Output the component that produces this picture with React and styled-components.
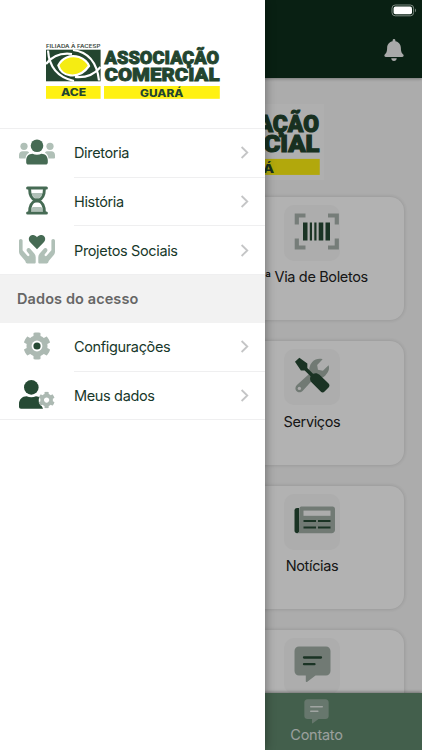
import styled, { createGlobalStyle } from 'styled-components';
import { FaBell, FaCog } from 'react-icons/fa';

const Logo = ({ wide }) => (
  <LogoSvg viewBox="0 0 174 58" $wide={wide}>
    <text x="0" y="4.8" fontSize="4.9" fontWeight="600" fill="#3c4a42" textLength="54.5" lengthAdjust="spacingAndGlyphs">
      FILIADA À FACESP
    </text>
    <rect x="0" y="6.7" width="54.6" height="31.6" fill="#23452f" />
    <g fill="none" stroke="#fff" strokeWidth="2.2">
      <path d="M2 7.5C3 22 10 34 28 38" />
      <path d="M27 7C43 9 51 20 53 37.5" />
      <path d="M0 21C7 12 15 9.5 26 11" />
      <path d="M54.6 24C48 32 40 35 29 34" />
    </g>
    <path
      d="M12.3 22.5C16 15 24 11.5 33 14C38 15.8 41.5 19 43 23C38 30 32 33.2 24.5 32.4C18 31.6 14 28 12.3 22.5Z"
      fill="#f5ec12"
      stroke="#fff"
      strokeWidth="2.2"
    />
    <g fill="#23452f" stroke="#23452f" strokeWidth="0.9" fontWeight="900" fontFamily="Roboto">
      <text x="58.6" y="21.2" fontSize="18.4" textLength="114.6" lengthAdjust="spacingAndGlyphs">ASSOCIAÇÃO</text>
      <text x="58.6" y="37.8" fontSize="19" textLength="115" lengthAdjust="spacingAndGlyphs">COMERCIAL</text>
    </g>
    <rect x="0" y="43" width="54.6" height="12.8" fill="#fff112" />
    <rect x="58" y="43" width="115.8" height="12.8" fill="#fff112" />
    <g fill="#23452f" fontWeight="800">
      <text x="15" y="53" fontSize="10.4" textLength="25.2" lengthAdjust="spacingAndGlyphs">ACE</text>
      <text x="94" y="54" fontSize="9.8" textLength="43.4" lengthAdjust="spacingAndGlyphs">GUARÁ</text>
    </g>
  </LogoSvg>
);

const PeopleIcon = () => (
  <svg width="36" height="26" viewBox="0 0 36 26">
    <g fill="#b0c0b7">
      <circle cx="5" cy="7.3" r="3.6" />
      <circle cx="31" cy="7.3" r="3.6" />
      <path d="M3.6 12.3H7.2C8.5 12.3 9.5 12.8 10.2 13.6C7.8 15 6.8 17 6.5 19.6H1.2C.5 19.6 0 19.1 0 18.4V16C0 13.9 1.6 12.3 3.6 12.3ZM32.4 12.3H28.8C27.5 12.3 26.5 12.8 25.8 13.6C28.2 15 29.2 17 29.5 19.6H34.8C35.5 19.6 36 19.1 36 18.4V16C36 13.9 34.4 12.3 32.4 12.3Z" />
    </g>
    <g fill="#466b54">
      <circle cx="18" cy="6.7" r="6.3" />
      <path d="M13.5 14.8C15 15.4 16.4 15.7 18 15.7C19.6 15.7 21 15.4 22.5 14.8C26.3 14.8 28.8 17.6 28.8 21.3V23.4C28.8 24.6 27.9 25.5 26.7 25.5H9.3C8.1 25.5 7.2 24.6 7.2 23.4V21.3C7.2 17.6 9.7 14.8 13.5 14.8Z" />
    </g>
  </svg>
);

const HourglassIcon = () => (
  <svg width="22" height="29" viewBox="0 0 22 29">
    <path d="M5.3 7H16.7C15.6 10.2 13.6 12.5 11 13.4C8.4 12.5 6.4 10.2 5.3 7ZM5 25C5.2 22.9 5.8 22 6.8 21H15.2C16.2 22 16.8 22.9 17 25Z" fill="#b0c0b7" />
    <path d="M3.6 3C3.6 8.5 6 13 9.6 14.5C6 16 3.6 20.5 3.6 26M18.4 3C18.4 8.5 16 13 12.4 14.5C16 16 18.4 20.5 18.4 26" fill="none" stroke="#466b54" strokeWidth="2.9" />
    <path d="M8 12.6H14L12.8 14.5L14 16.4H8L9.2 14.5Z" fill="#466b54" />
    <path d="M1.6 2H20.4M1.6 27H20.4" stroke="#466b54" strokeWidth="3" strokeLinecap="round" />
  </svg>
);

const handPath =
  'M0 5.7C0 4.6.8 3.9 1.8 3.9S3.6 4.7 3.6 5.7V15.2L8.4 20.8C9.5 21.8 11 20.5 10.2 19.3L8 16.5C7.2 15.3 7.5 14.1 8.4 13.5C9.3 12.8 10.6 13 11.4 13.9L15.3 18.5C16.2 19.6 16.7 20.8 16.7 22.2V27.2C16.7 28 16.2 28.5 15.4 28.5H8.2C7.4 28.5 7 28 6.7 27.3L6.3 26L1 19.7C.3 18.8 0 17.9 0 16.8Z';

const HandsIcon = () => (
  <svg width="36" height="29" viewBox="0 0 36 29">
    <path d={handPath} fill="#b0c0b7" />
    <path d={handPath} fill="#b0c0b7" transform="translate(36 0) scale(-1 1)" />
    <path d="M18 14.2L11.2 7.3C9.3 5.3 9.4 2.3 11.4.8C13.5-.8 16.3.1 18 2.2C19.7.1 22.5-.8 24.6.8C26.6 2.3 26.7 5.3 24.8 7.3Z" fill="#466b54" />
  </svg>
);

const GearIcon = () => (
  <svg width="28" height="28" viewBox="0 0 28 28">
    <FaCog size={28} color="#acb9b2" />
    <circle cx="14" cy="14" r="5.4" fill="#fff" />
    <circle cx="14" cy="14" r="3.6" fill="#264a34" />
  </svg>
);

const UserGearIcon = () => (
  <svg width="36" height="29" viewBox="0 0 36 29">
    <g fill="#264a34">
      <circle cx="12.3" cy="7.4" r="7.3" />
      <path d="M7.6 16.3C10.6 17.7 14 17.7 17 16.3C19 16.4 20 16.8 21 17.5L19.7 22L22.8 26L24 28.7H2C.8 28.7 0 27.9 0 26.7V24C0 19.6 3.2 16.3 7.6 16.3Z" />
    </g>
    <circle cx="27.7" cy="20" r="8" fill="#fff" />
    <FaCog x="19.2" y="11.6" size={16.8} color="#acb9b2" />
  </svg>
);

const BarcodeIcon = () => (
  <svg width="46" height="37" viewBox="0 0 46 37">
    <path d="M2.8 11.5V2.5H11.5M34 2.5H42.8V11.5M42.8 25.5V34.5H34M11.5 34.5H2.8V25.5" fill="none" stroke="#a9b4ae" strokeWidth="4.2" />
    <path d="M9 9.5H13.5V27.5H9ZM15.8 9.5H18V27.5H15.8ZM20.3 9.5H22.5V27.5H20.3ZM24.7 9.5H29.3V27.5H24.7ZM31.5 9.5H36V27.5H31.5Z" fill="#264a34" />
  </svg>
);

const ToolsIcon = () => (
  <svg width="37" height="37" viewBox="0 0 38 38">
    <path d="M16 17L3 28.8C1 30.8 1 33.3 2.5 35S7 36.8 8.8 35L21 21.6C25 22.7 29 22 32 19.2C35.5 16 36.8 12 35.5 8.6L29.7 14.2L24.6 13.2L23.8 8.3L29.4 2.3C25.5 1.3 21.5 2.2 18.7 5.2C15.8 8.5 15 12.8 16 17Z" fill="#a2afa7" />
    <circle cx="5.5" cy="32.3" r="1.7" fill="#f7f7f7" />
    <path d="M1 5L5.5 .7L13.7 6.8V11.2L19.6 17.1C22 16.1 24.4 16.5 26.2 18.3L35.5 27.3C36.7 28.5 36.7 30 35.5 31.2L31.4 35.4C30.2 36.7 28.6 36.7 27.4 35.4L18.2 26.2C16.4 24.4 16 22 17 19.7L11 13.8H7.1Z" fill="#264a34" />
  </svg>
);

const NewsIcon = () => (
  <svg width="42" height="28" viewBox="0 0 42 28">
    <path d="M5 2H3C1.5 2 .5 3 .5 4.5V24.5C.5 28.2 5.5 28.2 5.5 24.5Z" fill="#264a34" />
    <path d="M7.5 .5H38.5C40 .5 41 1.5 41 3V24C41 26 39.5 27.2 37.7 27.2H3C4.8 26.8 5.3 25.5 5.3 24V3C5.3 1.5 6 .5 7.5 .5Z" fill="#a2afa7" />
    <rect x="9.5" y="4.6" width="27" height="5.2" fill="#f7f7f7" />
    <path d="M9.5 15H22M24 15H36.5M9.5 21.6H22M24 21.6H36.5" stroke="#264a34" strokeWidth="2" />
  </svg>
);

const ChatIcon = ({ size = 37, fill = '#a2afa7', line = '#264a34' }) => (
  <svg width={size} height={size} viewBox="0 0 37 37">
    <path d="M5 .5H32C34.5 .5 36.5 2.5 36.5 5V25C36.5 27.5 34.5 29.5 32 29.5H21.5L13 35.9C12.4 36.3 11.8 36 11.8 35.3V29.5H5C2.5 29.5 .5 27.5 .5 25V5C.5 2.5 2.5 .5 5 .5Z" fill={fill} />
    <path d="M10 11.5H27M10 18.2H20.5" stroke={line} strokeWidth="2.3" strokeLinecap="round" />
  </svg>
);

const Chevron = () => (
  <svg width="9" height="13" viewBox="0 0 9 13">
    <path d="M1.6 1L7.3 6.5L1.6 12" fill="none" stroke="#c4c5c6" strokeWidth="1.8" />
  </svg>
);

const cards = [
  { id: 1, text: '2ª Via de Boletos', icon: <BarcodeIcon /> },
  { id: 2, text: 'Serviços', icon: <ToolsIcon /> },
  { id: 3, text: 'Notícias', icon: <NewsIcon /> },
  { id: 4, text: '', icon: <ChatIcon /> },
];

const menu = [
  { id: 1, text: 'Diretoria', icon: <PeopleIcon /> },
  { id: 2, text: 'História', icon: <HourglassIcon /> },
  { id: 3, text: 'Projetos Sociais', icon: <HandsIcon /> },
];

const access = [
  { id: 4, text: 'Configurações', icon: <GearIcon /> },
  { id: 5, text: 'Meus dados', icon: <UserGearIcon /> },
];

const MenuList = ({ items }) => (
  <List>
    {items.map(({ id, text, icon }) => (
      <MenuRow key={id}>
        <MenuIcon>{icon}</MenuIcon>
        <MenuLabel>
          <span>{text}</span>
          <Chevron />
        </MenuLabel>
      </MenuRow>
    ))}
  </List>
);

const App = () => {
  return (
    <Screen>
      <GlobalStyle />
      <Home>
        <Header>
          <FaBell size={22} color="#f3f3f3" />
        </Header>
        <Content>
          <Banner>
            <Logo wide />
          </Banner>
          <Cards>
            {cards.map(({ id, text, icon }) => (
              <Card key={id}>
                <Tile>{icon}</Tile>
                <CardLabel>{text}</CardLabel>
              </Card>
            ))}
          </Cards>
        </Content>
        <TabBar>
          <Tab>
            <ChatIcon size={25} fill="#94ab9c" line="#e6ece8" />
            <span>Contato</span>
          </Tab>
        </TabBar>
      </Home>
      <Backdrop />
      <Drawer>
        <DrawerTop>
          <Logo />
        </DrawerTop>
        <MenuList items={menu} />
        <SectionTitle>Dados do acesso</SectionTitle>
        <MenuList items={access} />
      </Drawer>
      <Battery>
        <svg width="26" height="13" viewBox="0 0 26 13">
          <rect x="1" y="1" width="21.6" height="10.8" rx="3.2" fill="none" stroke="#7d8a82" />
          <rect x="2.6" y="2.6" width="18.4" height="7.6" rx="1.8" fill="#fff" />
          <path d="M24 4.6C25.3 5.1 25.3 7.7 24 8.2Z" fill="#7d8a82" />
        </svg>
      </Battery>
    </Screen>
  );
};
export default App;

const GlobalStyle = createGlobalStyle`
  * {
    box-sizing: border-box;
  }
  body {
    margin: 0;
    font-family: Inter, 'Liberation Sans', sans-serif;
  }
  svg {
    display: block;
    flex-shrink: 0;
  }
`;

const Screen = styled.div`
  position: relative;
  width: 422px;
  height: 750px;
  overflow: hidden;
`;

const Home = styled.main`
  display: flex;
  flex-direction: column;
  height: 100%;
  background: #f7f7f7;
`;

const Header = styled.header`
  display: flex;
  align-items: flex-end;
  justify-content: flex-end;
  height: 77.5px;
  flex-shrink: 0;
  padding: 0 17px 17px;
  background: #0e2f1c;
  box-shadow: 0 1px 3px rgba(0, 0, 0, 0.3);
`;

const Content = styled.div`
  flex: 1;
  min-height: 0;
  overflow: hidden;
`;

const Banner = styled.div`
  display: flex;
  justify-content: center;
  width: 226px;
  height: 76px;
  margin: 26px auto 17px;
  padding-top: 1px;
  background: #fbfbfb;
`;

const LogoSvg = styled.svg`
  width: ${({ $wide }) => ($wide ? '218px' : '174px')};
  height: ${({ $wide }) => ($wide ? '72.7px' : '58px')};
  overflow: visible;
`;

const Cards = styled.div`
  display: grid;
  gap: 21px;
  padding: 0 18px 0 220px;
`;

const Card = styled.div`
  display: flex;
  flex-direction: column;
  align-items: center;
  height: 123.6px;
  padding-top: 8px;
  border-radius: 14px;
  background: #fff;
  box-shadow: 0 0 4px rgba(0, 0, 0, 0.16);
`;

const Tile = styled.div`
  display: flex;
  align-items: center;
  width: 56px;
  height: 56px;
  flex-shrink: 0;
  padding: 0 0 3px 10px;
  border-radius: 10px;
  background: #f8f8f8;
`;

const CardLabel = styled.span`
  margin-top: 7.5px;
  font-size: 14.5px;
  line-height: 18px;
  letter-spacing: -0.36px;
  white-space: nowrap;
  color: #222;
`;

const TabBar = styled.nav`
  display: flex;
  height: 57.5px;
  flex-shrink: 0;
  padding-left: 211px;
  background: #61896d;
  box-shadow: 0 -1px 3px rgba(0, 0, 0, 0.35);
  z-index: 1;
`;

const Tab = styled.div`
  display: flex;
  flex-direction: column;
  align-items: center;
  gap: 2px;
  width: 211px;
  padding-top: 6px;
  font-size: 14.5px;
  letter-spacing: -0.25px;
  color: #dfe5e1;
`;

const Backdrop = styled.div`
  position: absolute;
  inset: 0;
  z-index: 2;
  background: rgba(0, 0, 0, 0.3);
`;

const Drawer = styled.aside`
  position: absolute;
  inset: 0 auto 0 0;
  z-index: 3;
  width: 265px;
  background: #fff;
  box-shadow: 0 0 10px rgba(0, 0, 0, 0.4);
`;

const DrawerTop = styled.div`
  display: flex;
  height: 129px;
  padding: 43px 0 0 46px;
  border-bottom: 1px solid #efeff0;
`;

const List = styled.ul`
  margin: 0;
  padding: 0;
  list-style: none;
`;

const MenuRow = styled.li`
  display: flex;
  height: 48.7px;
  border-bottom: 1px solid transparent;
  &:last-child {
    border-color: #efeff0;
  }
`;

const MenuIcon = styled.div`
  display: flex;
  align-items: center;
  justify-content: center;
  width: 74px;
  padding-bottom: 2px;
`;

const MenuLabel = styled.div`
  display: flex;
  flex: 1;
  align-items: center;
  justify-content: space-between;
  padding-right: 16px;
  font-size: 14.5px;
  letter-spacing: -0.35px;
  color: #17382a;
  ${MenuRow}:not(:last-child) & {
    box-shadow: 0 1px #efeff0;
  }
`;

const SectionTitle = styled.h2`
  display: flex;
  align-items: center;
  height: 48px;
  margin: 0;
  padding: 0 0 2px 17px;
  font-size: 14.5px;
  font-weight: 600;
  letter-spacing: 0.1px;
  color: #666;
  background: #f2f2f2;
`;

const Battery = styled.div`
  position: absolute;
  top: 4px;
  right: 5px;
  z-index: 4;
`;
